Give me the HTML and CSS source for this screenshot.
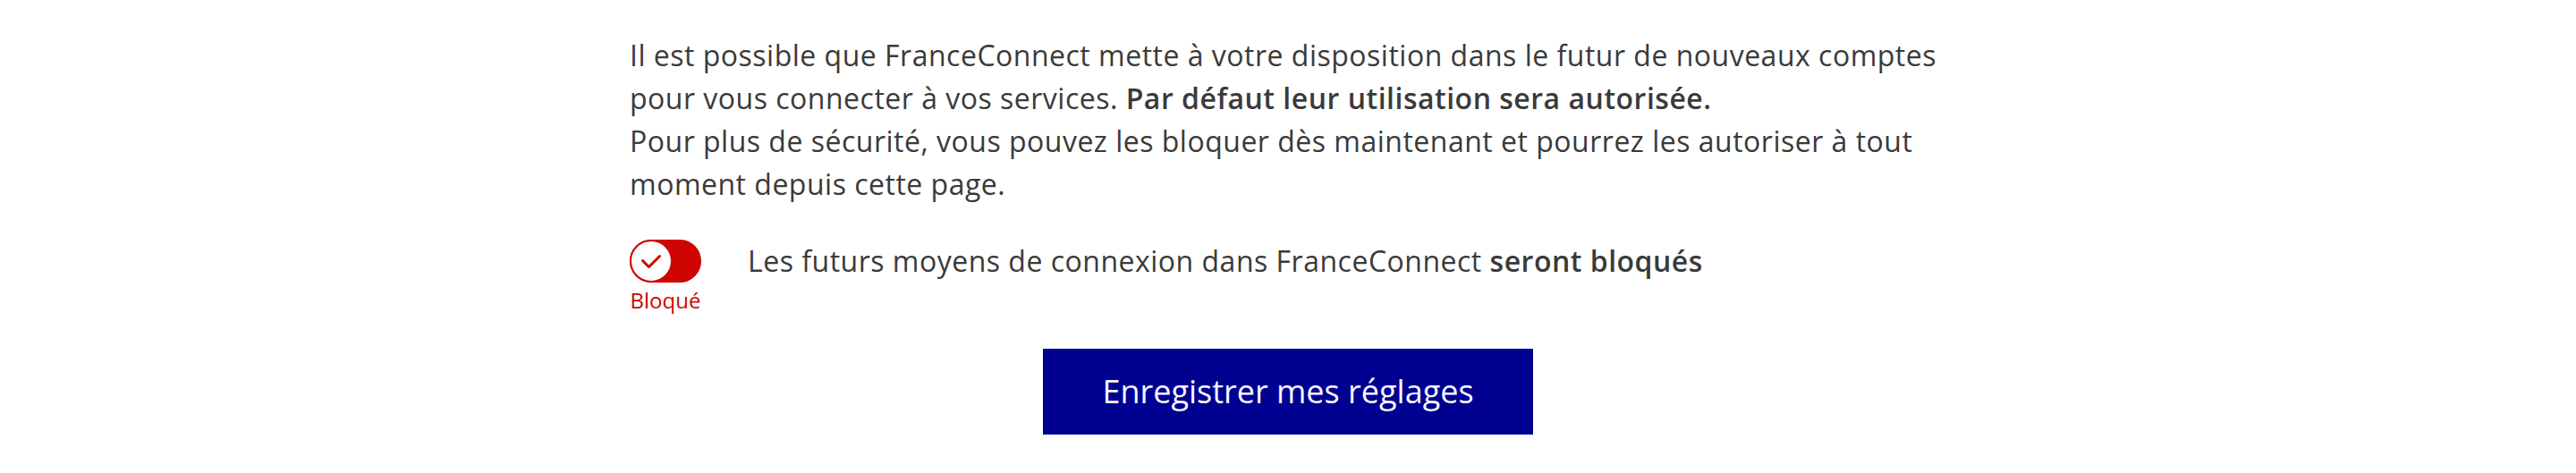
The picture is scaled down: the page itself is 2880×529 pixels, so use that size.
FILE: index.html
```html
<!DOCTYPE html>
<html lang="fr">

<head>
    <meta charset="utf-8">
    <title>Mes réglages</title>
    <link rel="stylesheet" href="styles.css">
</head>

<body>
    <div class="wrap">
        <p class="intro">
            Il est possible que FranceConnect mette à votre disposition dans le futur de nouveaux comptes
            pour vous connecter à vos services. <b>Par défaut leur utilisation sera autorisée.</b><br>
            Pour plus de sécurité, vous pouvez les bloquer dès maintenant et pourrez les autoriser à tout
            moment depuis cette page.
        </p>

        <div class="toggle-row">
            <div class="toggle-box">
                <span class="toggle">
                    <span class="knob">
                        <svg width="24" height="18" viewBox="0 0 24 18">
                            <path d="M2.5 8.5 L9.5 15.5 L21.5 3.5" fill="none" stroke="#ce0500" stroke-width="3" stroke-linecap="round" stroke-linejoin="round"/>
                        </svg>
                    </span>
                </span>
                <span class="toggle-state">Bloqué</span>
            </div>
            <label class="toggle-label">Les futurs moyens de connexion dans FranceConnect <b>seront bloqués</b></label>
        </div>

        <div class="actions">
            <button class="btn" type="button">Enregistrer mes réglages</button>
        </div>
    </div>
</body>

</html>
```

FILE: styles.css
```css
* {
    margin: 0;
    padding: 0;
    box-sizing: border-box;
}

body {
    font-family: "Open Sans", "Noto Sans", sans-serif;
    color: #3a3a3a;
    background: #fff;
}

.wrap {
    width: 1472px;
    margin: 0 auto;
    padding-top: 38px;
}

.intro {
    font-size: 32px;
    line-height: 48px;
    letter-spacing: 0.5px;
}

.intro b,
.toggle-label b {
    font-weight: 600;
}

/* interrupteur + libellé */
.toggle-row {
    display: flex;
    align-items: flex-start;
    gap: 52px;
    margin-top: 38px;
}

.toggle-box {
    display: flex;
    flex-direction: column;
    align-items: center;
    width: 80px;
}

.toggle {
    display: flex;
    width: 80px;
    height: 48px;
    border-radius: 24px;
    background: #ce0500;
}

.knob {
    display: flex;
    align-items: center;
    justify-content: center;
    width: 48px;
    height: 48px;
    border-radius: 50%;
    background: #fff;
    border: 2px solid #ce0500;
    box-shadow: inset 0 0 0 1px #fff;
}

.toggle-state {
    margin-top: 4px;
    font-size: 24px;
    line-height: 32px;
    color: #ce0500;
}

.toggle-label {
    font-size: 32px;
    line-height: 48px;
    letter-spacing: 0.5px;
}

.actions {
    display: flex;
    justify-content: center;
    margin-top: 38px;
}

.btn {
    height: 96px;
    padding: 0 66px;
    border: 0;
    background: #000091;
    color: #f5f5fe;
    font: 400 36px/96px "Open Sans", sans-serif;
    cursor: pointer;
}
```
